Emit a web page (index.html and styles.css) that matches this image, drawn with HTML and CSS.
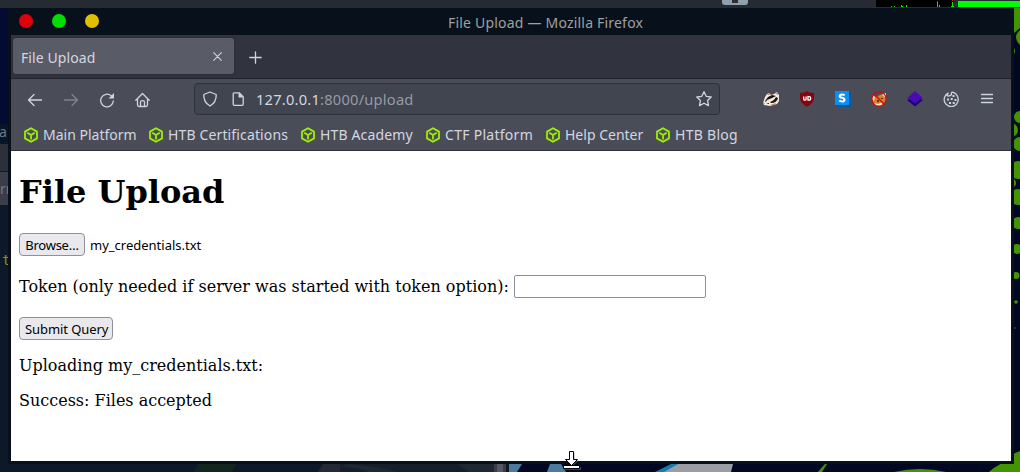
FILE: index.html
```html
<!DOCTYPE html>
<html lang="en">
<head>
<meta charset="utf-8">
<title>File Upload</title>
<link rel="stylesheet" href="styles.css">
</head>
<body>
<svg class="desktop" width="1020" height="472" viewBox="0 0 1020 472">
  <rect width="1020" height="472" fill="#020824"/>
  <rect width="11" height="124" fill="#030b33"/>
  <rect y="124" width="509" height="348" fill="#0d1828"/>
  <rect y="124" width="8" height="21" fill="#071626"/>
  <rect y="144" width="8" height="27" fill="#2b303a"/>
  <rect y="172" width="8" height="33" fill="#3b3d49"/>
  <text class="behind" x="-1" y="137" fill="#6e7983">a</text>
  <text class="behind" x="0" y="194" fill="#777984">rn</text>
  <text class="behind mono" x="2" y="265" fill="#8a9200">t</text>
  <path d="M198 464h38l-4 8h-38z" fill="#12251f"/>
  <path d="M323 464h17v8h-22z" fill="#232a35"/>
  <path d="M340 464h154v8H340z" fill="#151f2c"/>
  <path d="M348 464q28 2 50 8h-30q-10-5-28-5zM457 464h37v8h-25z" fill="#1d2833"/>
  <rect x="494" y="464" width="12" height="8" fill="#3a3d48"/><rect x="497" y="464" width="6" height="8" fill="#555864"/>
  <path d="M509 464h13l-5 8h-8zM550 464h11l5 8h-19z" fill="#4c7aa0"/>
  <path d="M671 464h9l-15 8h-10z" fill="#137eaf"/>
  <path d="M678 464h55l-2 8h-67z" fill="#9a9ca6"/>
  <g fill="#429500">
    <path d="M818 472q4-5 7-8h2l-5 8zM894 472q26-6 52 0zM989 472q11-10 24-12V454l7-3v21z"/>
    <path d="M1014 8h6v20l-6 5zM1020 30q-8 7 0 15zM1014 48q2 3 0 6z"/>
    <circle cx="1020" cy="117" r="6"/><circle cx="1011" cy="130" r="7"/><circle cx="1020" cy="144" r="7"/>
    <circle cx="1018" cy="170" r="9"/><circle cx="1011" cy="183" r="5"/><circle cx="1018" cy="197" r="8"/>
    <circle cx="1018" cy="223" r="6"/><circle cx="1017" cy="249" r="5"/><circle cx="1016" cy="275.500" r="3.500"/>
    <circle cx="1016" cy="302" r="1.800"/><circle cx="1015" cy="328" r="1" fill="#234b13"/>
  </g>
  <rect width="1020" height="8" fill="#262b33"/>
  <rect x="722" y="-6" width="26" height="11" rx="3" fill="#91a0ad"/><rect x="732" y="0" width="6" height="3" fill="#302e32"/>
  <rect x="876" width="78" height="7" fill="#000"/>
  <path d="M891 6h1v1h-1zM894 6h1v1h-1zM901 5h1v2h-1zM902 6h1v1h-1zM906 5h1v2h-1zM937 2h1v5h-1zM939 5h1v2h-1zM952 2h1v5h-1zM951 6h3v1h-3z" fill="#00ef00"/>
  <path d="M937 1h1v1h-1zM952 0h1v1h-1z" fill="#e02020"/>
  <rect x="958" y="1" width="62" height="6" fill="#0f0"/>
</svg>

<svg class="symbols" width="0" height="0">
  <symbol id="cube" viewBox="0 0 16 16"><path d="M8 1.200 14 4.600v6.800L8 14.800 2 11.400V4.600zM4.200 5.800 8 8l3.800-2.200M8 8v4.500" fill="none" stroke="#9fef00" stroke-width="1.800" stroke-linejoin="round"/></symbol>
</svg>

<main class="window">
  <header class="titlebar">
    <div class="lights"><i class="light red"></i><i class="light green"></i><i class="light yellow"></i></div>
    <span class="title">File Upload — Mozilla Firefox</span>
  </header>
  <div class="tabs">
    <div class="tab"><span>File Upload</span>
      <svg width="9" height="9" viewBox="0 0 9 9"><path d="m.7.700 7.600 7.600M8.300.7.700 8.300" class="line thin"/></svg>
    </div>
    <svg class="plus" width="13" height="13" viewBox="0 0 13 13"><path d="M6.500.8v11.400M.8 6.500h11.400" class="line"/></svg>
  </div>
  <nav class="toolbar">
    <svg class="nav" width="16" height="16" viewBox="0 0 16 16"><path d="M14.500 8h-13M7 2.500 1.500 8 7 13.500" class="line"/></svg>
    <svg class="nav dim" width="16" height="16" viewBox="0 0 16 16"><path d="M1.500 8h13M9 2.500 14.500 8 9 13.500" class="line"/></svg>
    <svg class="nav" width="16" height="16" viewBox="0 0 16 16"><path d="M14.300 9a6.300 6.300 0 1 1-2.200-5.300l1.300 1.100" class="line"/><path d="M15 1v5.500H9.500z" class="solid"/></svg>
    <svg class="nav" width="16" height="16" viewBox="0 0 16 16"><path d="M.8 8.200 7.500 1.500 14.200 8.200M2.500 6.600v6.200q0 1.700 1.700 1.700h6.600q1.700 0 1.700-1.700V6.600M5.500 14v-4q0-1.300 2-1.300t2 1.300v4" class="line"/></svg>
    <div class="urlbar">
      <svg width="16" height="16" viewBox="0 0 16 16"><path d="M8 1 14.200 3.500q.3 8-6.200 11.500Q1.500 11.500 1.800 3.500z" class="line"/></svg>
      <svg width="16" height="16" viewBox="0 0 16 16"><path d="M4.200 1.800h5l4 4v7.500q0 1-1 1h-8q-1 0-1-1V2.800q0-1 1-1z" class="line"/><path d="M8.500 1.500v5h5z" class="solid"/></svg>
      <span class="url">127.0.0.1<b>:8000/upload</b></span>
      <svg class="star" width="18" height="18" viewBox="0 0 18 18"><path d="m9 1.700 2.200 4.600 5 .7-3.600 3.500.9 5.100L9 13.200l-4.500 2.400.9-5.100L1.800 7l5-.7z" class="line"/></svg>
    </div>
    <div class="extensions">
      <svg width="18" height="16" viewBox="0 0 18 16"><path d="m1 12 2-6 2-3 2-1 2 2 3-1 3-2 2 3v6l-2 3-7 2-6-1z" fill="#f6eadc"/><path d="m3 10 3-4 4-2 4 1-4 2-5 2-1 2zM8 11q4-1 6-5l2 1q-1 5-7 5zM4 13l3-1v1z" fill="#171717"/><path d="m5 4 2-2 1 2zM13 2l3-1v3zM1 11l2 2H1zM8 14l6-2-1 2z" fill="#c08a63"/></svg>
      <svg width="16" height="16" viewBox="0 0 16 16"><path d="M8 .3Q10.500 1.800 15 2q.5 7-1.500 9.500Q12 13.500 8 15.700 4 13.500 2.500 11.500.5 9 1 2 5.500 1.800 8 .3z" fill="#800610"/><path d="M4.700 5.500v2.400q0 1.300 1.200 1.300t1.200-1.300V5.500M9 5.500v3.700h.8q1.900 0 1.900-1.800T9.800 5.700z" fill="none" stroke="#fff" stroke-width="1.300"/></svg>
      <svg width="16" height="16" viewBox="0 0 16 16"><path d="m14 0 2 2v14H3l-3-2z" fill="#00579c"/><rect width="14" height="14" fill="#0a8df5"/><path d="M9.700 4.300Q8.600 3.500 7 3.500q-2.300 0-2.300 1.700 0 1.200 2.300 1.600 2.500.4 2.500 1.900Q9.500 10.500 7 10.500q-1.700 0-2.800-.9" fill="none" stroke="#fff" stroke-width="2"/></svg>
      <svg width="16" height="16" viewBox="0 0 16 16"><path d="m1 4 4 2 4-2 5-2 1 7-3 5-6 1-4-4z" fill="#dc7f20"/><path d="m1 4 3 2-1 4-2-2zM11 4l4-2v5zM3 12l4 1 5-2-2 4-5 0z" fill="#f5e4cc"/><path d="M6 9h2v2H6zM10 7h2v1h-2z" fill="#61300a"/><circle cx="8" cy="8" r="7.200" fill="none" stroke="#c4101a" stroke-width="1.300"/><path d="m3 3 10 10" stroke="#c4101a" stroke-width="1.400"/></svg>
      <svg width="16" height="16" viewBox="0 0 16 16"><path d="m0 9 8-4 8 4-8 6.500z" fill="#220078"/><path d="m8 0 7.500 6.700L8 12.500.5 6.700z" fill="#4b0ab3"/></svg>
      <svg width="16" height="16" viewBox="0 0 16 16"><path d="M5.200 2.200A7 7 0 1 0 14.500 5.500 7 7 0 0 0 9 1.100Q8 2.400 8.500 3.700 6 5.800 4.200 4.500q-.3-1.300 1-2.300" class="line"/><g class="solid"><rect x="9.500" y="4" width="2" height="2"/><rect x="4" y="7.500" width="2" height="2"/><rect x="7.700" y="7" width="2" height="2"/><rect x="11.500" y="8" width="2" height="2"/><rect x="6" y="11" width="2" height="2"/><rect x="9.700" y="11" width="2" height="2"/></g></svg>
      <svg width="16" height="16" viewBox="0 0 16 16"><path d="M2.500 3.500h11M2.500 7.500h11M2.500 11.500h11" class="line"/></svg>
    </div>
  </nav>
  <nav class="bookmarks">
    <a><svg width="16" height="16"><use href="#cube"/></svg><span>Main Platform</span></a>
    <a><svg width="16" height="16"><use href="#cube"/></svg><span class="wide">HTB Certifications</span></a>
    <a><svg width="16" height="16"><use href="#cube"/></svg><span class="wide">HTB Academy</span></a>
    <a><svg width="16" height="16"><use href="#cube"/></svg><span class="wider">CTF Platform</span></a>
    <a><svg width="16" height="16"><use href="#cube"/></svg><span>Help Center</span></a>
    <a><svg width="16" height="16"><use href="#cube"/></svg><span class="wider">HTB Blog</span></a>
  </nav>
  <section class="page">
    <h1>File Upload</h1>
    <div class="file-row"><button>Browse…</button><span>my_credentials.txt</span></div>
    <label class="token-row">Token (only needed if server was started with token option): <input type="text"></label>
    <button class="submit">Submit Query</button>
    <p>Uploading my_credentials.txt:</p>
    <p>Success: Files accepted</p>
  </section>
</main>
<svg class="cursor" width="20" height="22" viewBox="0 0 20 22"><path d="M7.500 1.500h4v8h4l-6 6-6-6h4zM2 16h16v3H2z" transform="translate(1 1)" fill="#666" opacity=".6"/><path d="M7.500 1.500h4v8h4l-6 6-6-6h4z" fill="#fff" stroke="#000"/><path d="M1.500 15.500h16v3h-16z" fill="#fff" stroke="#000"/></svg>
</body>
</html>
```

FILE: styles.css
```css
* { box-sizing: border-box; }
body {
  margin: 0;
  width: 1020px;
  height: 472px;
  overflow: hidden;
  position: relative;
  font-family: "Noto Sans", sans-serif;
}
svg { display: block; flex: none; }
.desktop { position: absolute; left: 0; top: 0; }
.symbols { position: absolute; }
.behind { font: 14px "Noto Sans", sans-serif; }
.mono { font-family: "DejaVu Sans Mono", monospace; }
.window {
  position: absolute;
  left: 8px;
  top: 8px;
  width: 1006px;
  height: 456px;
  padding: 0 3px 3px;
  background: #08111b;
  display: flex;
  flex-direction: column;
}
.titlebar {
  height: 27px;
  display: grid;
  grid-template-columns: 437px 1fr;
  align-items: center;
  flex: none;
}
.lights { display: flex; gap: 19px; padding: 0 0 1px 8px; }
.light { width: 14px; height: 14px; border-radius: 50%; }
.red { background: #df000b; }
.green { background: #00df00; }
.yellow { background: #dfbf00; }
.title { font-size: 14px; line-height: 20px; letter-spacing: .2px; color: #9fa09f; padding-top: 2px; white-space: nowrap; }
.tabs {
  height: 44px;
  flex: none;
  display: flex;
  align-items: center;
  padding: 0 2px 1px;
  background: #31343f;
  border-bottom: 1px solid #20232c;
}
.tab {
  width: 221px;
  height: 36px;
  display: flex;
  align-items: center;
  justify-content: space-between;
  padding: 0 12px 0 8px;
  border-radius: 3px;
  background: #595b67;
  box-shadow: 0 0 2px #20232c;
  color: #d3d7e0;
  font-size: 14px;
}
.tab span { padding-top: 2px; letter-spacing: .1px; }
.plus { margin: 2px 0 0 15px; }
.line { fill: none; stroke: #d0d4df; stroke-width: 1.3; stroke-linejoin: round; stroke-linecap: round; }
.thin { stroke-width: 1.1; }
.solid { fill: #d0d4df; }
.toolbar {
  height: 40px;
  flex: none;
  display: flex;
  align-items: center;
  padding-left: 16px;
  background: #4a4d58;
}
.nav { margin: 1px 20px 0 0; }
.dim { opacity: .4; }
.urlbar {
  width: 526px;
  height: 32px;
  margin-left: 23px;
  border: 1px solid #2d313b;
  border-radius: 4px;
  background: #414550;
  display: flex;
  align-items: center;
  padding: 0 6px 0 7px;
  gap: 12px;
}
.url { color: #d3d7e0; font-size: 14.67px; letter-spacing: .22px; margin-left: -2px; }
.url b { font-weight: 400; color: #959aa5; }
.star { margin-left: auto; }
.extensions { display: flex; gap: 20px; margin-left: 42px; }
.extensions svg:first-child { margin-right: -1px; }
.bookmarks {
  height: 32px;
  flex: none;
  display: grid;
  grid-template-columns: 125px 152px 125px 120px 110px 90px;
  align-items: center;
  padding-left: 12px;
  background: #4a4d58;
  border-bottom: 1px solid #2f323c;
}
.bookmarks a { display: flex; gap: 4px; align-items: center; color: #d3d7e0; font-size: 14px; line-height: 20px; white-space: nowrap; }
.bookmarks .wide { letter-spacing: .14px; }
.bookmarks .wider { letter-spacing: .28px; }
.page {
  flex: 1;
  background: #fff;
  padding: 23px 8px 0;
  color: #000;
  font: 16px/19px "DejaVu Serif", serif;
}
h1 { font-size: 32px; line-height: 37px; margin: 0 0 22px; }
button {
  height: 23px;
  border: 1px solid #8f8f9d;
  border-radius: 4px;
  background: #e9e9ed;
  padding: 1px 5px 0;
  color: #000;
  font: 13px/20px "Noto Sans", sans-serif;
  letter-spacing: -.08px;
  white-space: nowrap;
}
.file-row { display: flex; align-items: center; gap: 5px; font: 13px/21px "Noto Sans", sans-serif; }
.file-row button { width: 66px; letter-spacing: -.25px; }
.file-row span { padding-top: 2px; }
.token-row { display: flex; align-items: center; gap: 5px; margin: 19px 0; white-space: nowrap; }
input { width: 192px; height: 23px; border: 1px solid #8f8f9d; border-radius: 2px; margin: 0; padding: 0; background: #fff; }
.submit { width: 94px; display: block; }
.page p { margin: 16px 0 0; }
.cursor { position: absolute; left: 562px; top: 450px; }
```
